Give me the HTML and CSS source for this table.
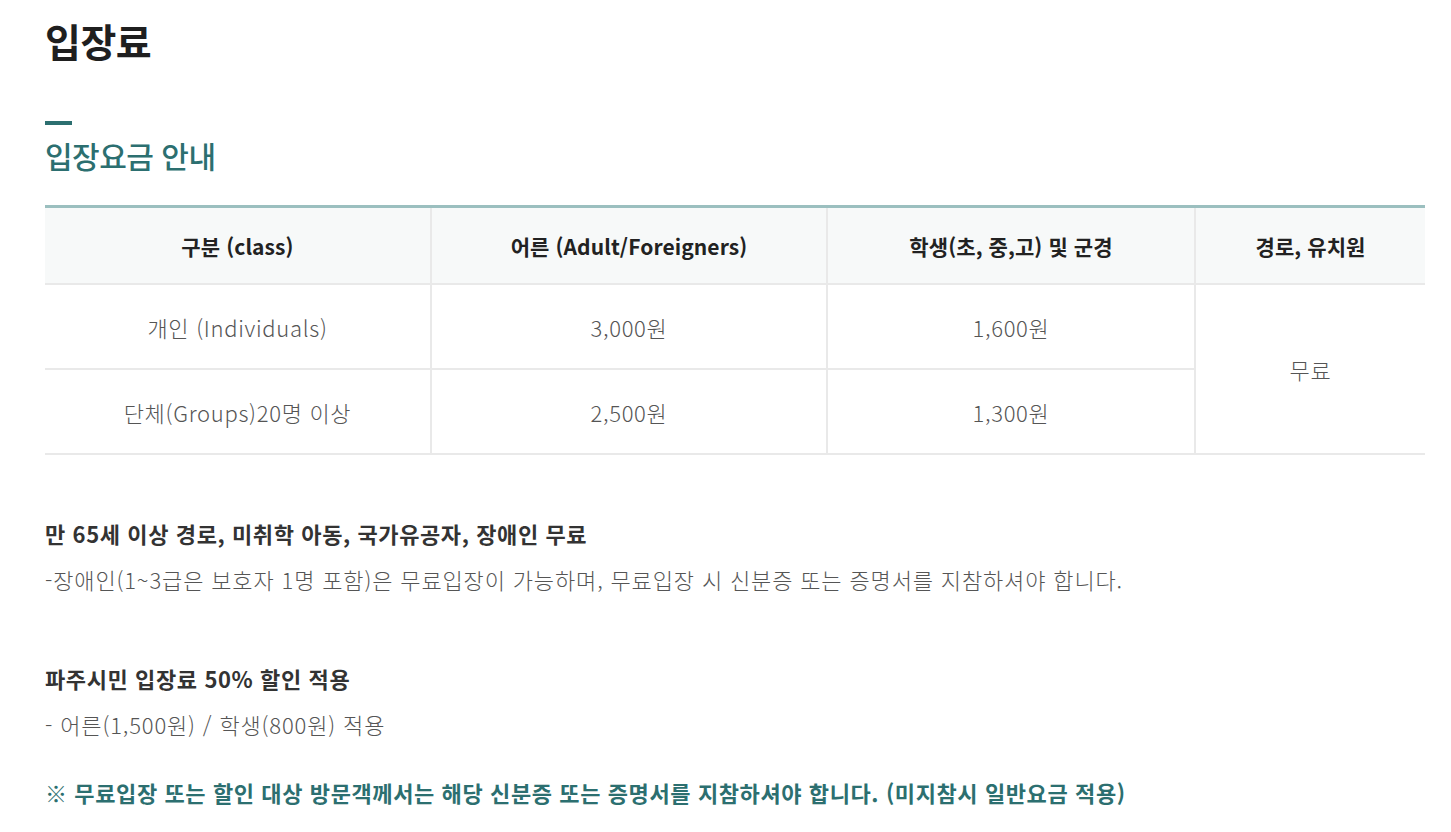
FILE: index.html
```html
<!DOCTYPE html>
<html lang="ko">
<head>
<meta charset="utf-8">
<title>입장료</title>
<link rel="stylesheet" href="styles.css">
</head>
<body>
<div class="page">
  <h1 class="title">입장료</h1>
  <div class="section">
    <span class="accent"></span>
    <h2 class="subtitle">입장요금 안내</h2>
  </div>
  <table class="fee">
    <colgroup>
      <col class="c1"><col class="c2"><col class="c3"><col class="c4">
    </colgroup>
    <thead>
      <tr>
        <th>구분 (class)</th>
        <th>어른 (Adult/Foreigners)</th>
        <th>학생(초, 중,고) 및 군경</th>
        <th>경로, 유치원</th>
      </tr>
    </thead>
    <tbody>
      <tr>
        <td>개인 (Individuals)</td>
        <td>3,000원</td>
        <td>1,600원</td>
        <td rowspan="2">무료</td>
      </tr>
      <tr>
        <td>단체(Groups)20명 이상</td>
        <td>2,500원</td>
        <td>1,300원</td>
      </tr>
    </tbody>
  </table>
  <div class="notes">
    <div class="note">
      <p class="note-head">만 65세 이상 경로, 미취학 아동, 국가유공자, 장애인 무료</p>
      <p class="note-body">-장애인(1~3급은 보호자 1명 포함)은 무료입장이 가능하며, 무료입장 시 신분증 또는 증명서를 지참하셔야 합니다.</p>
    </div>
    <div class="note">
      <p class="note-head">파주시민 입장료 50% 할인 적용</p>
      <p class="note-body">- 어른(1,500원) / 학생(800원) 적용</p>
    </div>
    <p class="warn">※ 무료입장 또는 할인 대상 방문객께서는 해당 신분증 또는 증명서를 지참하셔야 합니다. (미지참시 일반요금 적용)</p>
  </div>
</div>
</body>
</html>
```
FILE: styles.css
```css
html, body {
  margin: 0;
  padding: 0;
  background: #fff;
}
body {
  font-family: "Noto Sans CJK KR", "Noto Sans", sans-serif;
  color: #333;
}
.page {
  padding: 14px 26px 0 45px;
}
.title {
  margin: 0;
  font-size: 39px;
  font-weight: 700;
  line-height: 52px;
  color: #1f1f1f;
  letter-spacing: -0.5px;
}
.section {
  margin-top: 55px;
}
.accent {
  display: block;
  width: 27px;
  height: 4px;
  background: #2c6f70;
}
.subtitle {
  margin: 6px 0 0 0;
  font-size: 30px;
  font-weight: 500;
  line-height: 48px;
  color: #2c6f70;
  letter-spacing: -0.5px;
}
.fee {
  margin-top: 26px;
  width: 1380px;
  border-collapse: collapse;
  border-top: 3px solid #9bbfbf;
  table-layout: fixed;
}
.c1 { width: 386px; }
.c2 { width: 396px; }
.c3 { width: 368px; }
.c4 { width: 230px; }
.fee th, .fee td {
  text-align: center;
  border: 2px solid #e9e9e9;
  padding: 0;
}
.fee tr > :first-child { border-left: none; }
.fee tr > :last-child { border-right: none; }
.fee th {
  height: 75px;
  background: #f7f9f9;
  font-size: 21px;
  font-weight: 700;
  color: #222;
  border-top: none;
  letter-spacing: 0.1px;
}
.fee td {
  height: 83px;
  font-size: 22px;
  font-weight: 300;
  color: #555;
  letter-spacing: 0.7px;
}
.notes {
  padding-top: 58px;
}
.note {
  margin-bottom: 59px;
}
.note p {
  margin: 0;
}
.note-head {
  font-size: 22px;
  font-weight: 700;
  color: #333;
  line-height: 40px;
  letter-spacing: 0.6px;
}
.note-body {
  margin-top: 6px !important;
  font-size: 22px;
  font-weight: 300;
  color: #555;
  line-height: 40px;
  letter-spacing: 0.85px;
}
.warn {
  margin: -31px 0 0 0;
  font-size: 22px;
  font-weight: 700;
  color: #2c6f70;
  line-height: 40px;
  letter-spacing: 0.6px;
}
```
